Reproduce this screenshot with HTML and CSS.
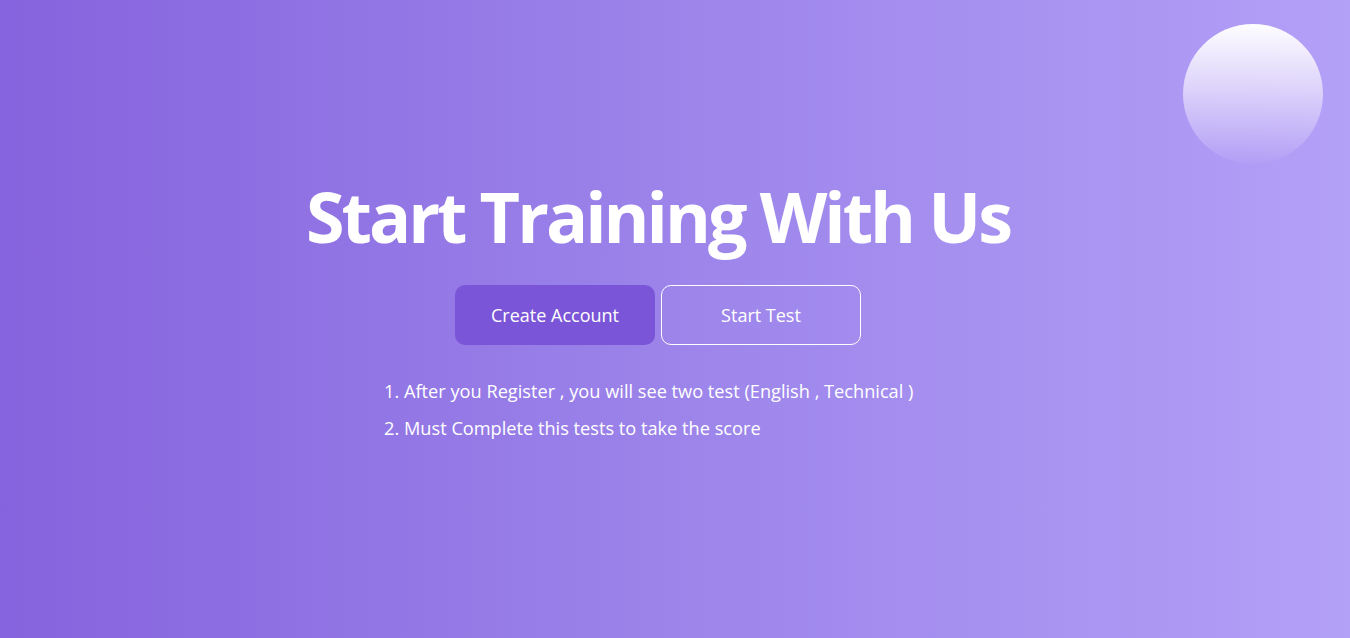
FILE: index.html
```html
<!DOCTYPE html>
<html>
<head>
<meta charset="utf-8">
<link rel="stylesheet" href="styles.css">
</head>
<body>
<div class="page">
  <div class="orb"></div>
  <main class="hero">
    <h1 class="title">Start Training With Us</h1>
    <div class="actions">
      <a class="btn btn-primary">Create Account</a>
      <a class="btn btn-outline">Start Test</a>
    </div>
    <ol class="notes">
      <li>After you Register , you will see two test (English , Technical )</li>
      <li>Must Complete this tests to take the score</li>
    </ol>
  </main>
</div>
</body>
</html>
```

FILE: styles.css
```css
* { box-sizing: border-box; }
html, body { margin: 0; padding: 0; }
body {
  font-family: "Open Sans", "Noto Sans", sans-serif;
  color: #fff;
}
.page {
  position: relative;
  width: 1350px;
  height: 638px;
  overflow: hidden;
  background: linear-gradient(90deg, #8663de 0%, #9c84ea 50%, #b3a0f7 100%);
}
.orb {
  position: absolute;
  left: 1183px;
  top: 24px;
  width: 140px;
  height: 140px;
  border-radius: 50%;
  background: linear-gradient(180deg, rgba(255,255,255,0.98) 0%, rgba(230,222,252,0.85) 45%, rgba(180,160,246,0.6) 100%);
}
.hero {
  display: flex;
  flex-direction: column;
  align-items: center;
  padding-top: 172px;
  padding-right: 34px;
}
.title {
  margin: 0;
  font-size: 70px;
  font-weight: 700;
  line-height: 88px;
  letter-spacing: -3px;
}
.actions {
  display: flex;
  gap: 6px;
  margin-top: 25px;
}
.btn {
  width: 200px;
  height: 60px;
  border-radius: 10px;
  display: flex;
  align-items: center;
  justify-content: center;
  font-size: 18px;
  color: #fff;
}
.btn-primary { background: #7b55d7; }
.btn-outline { border: 1px solid #fff; }
.notes {
  margin: 28px 0 0 0;
  padding-left: 38px;
  font-size: 18.2px;
  line-height: 37px;
  width: 584px;
}
```
